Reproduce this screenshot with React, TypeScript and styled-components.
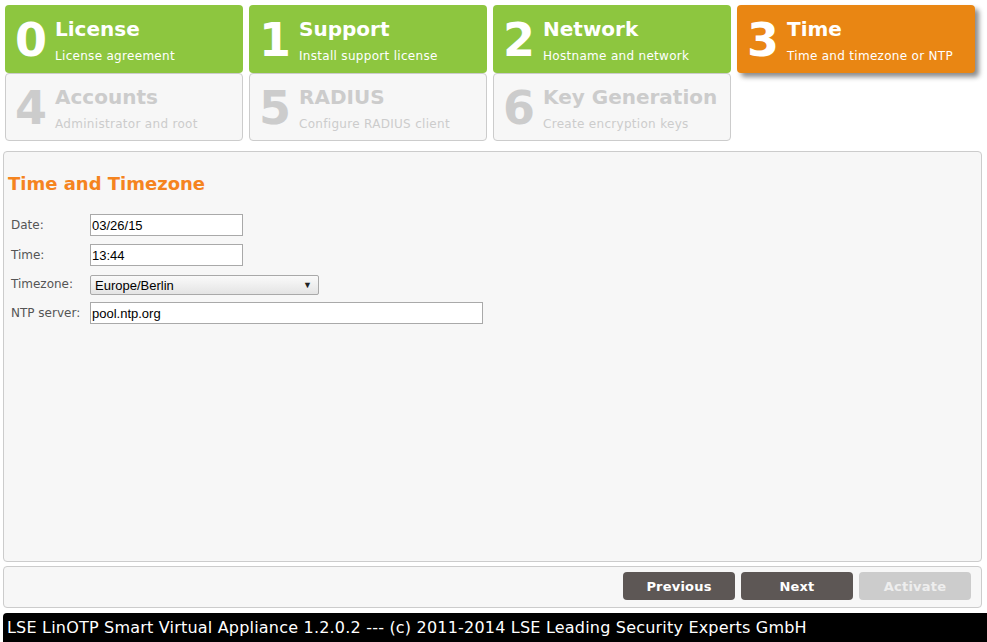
import styled, { createGlobalStyle } from 'styled-components';

const GlobalStyle = createGlobalStyle`
  html, body {
    margin: 0;
    padding: 0;
    background: #ffffff;
    font-family: "DejaVu Sans", Verdana, sans-serif;
  }
`;

const Page = styled.div`
  width: 987px;
  height: 642px;
  display: flex;
  flex-direction: column;
  padding: 5px 0 0 3px;
  box-sizing: border-box;
  overflow: hidden;
`;

const Steps = styled.div`
  display: grid;
  grid-template-columns: repeat(4, 238px);
  column-gap: 6px;
  padding-left: 2px;
`;

type TileKind = 'done' | 'current' | 'todo';

const Tile = styled.div<{ $kind: TileKind }>`
  height: 68px;
  box-sizing: border-box;
  border-radius: 4px;
  display: flex;
  align-items: flex-start;
  padding: 6px 0 0 9px;
  gap: 8px;
  background: ${p => (p.$kind === 'done' ? '#8dc63f' : p.$kind === 'current' ? '#e98613' : '#f7f7f7')};
  border: 1px solid ${p => (p.$kind === 'todo' ? '#cccccc' : 'transparent')};
  color: ${p => (p.$kind === 'todo' ? '#cccccc' : '#ffffff')};
  box-shadow: ${p => (p.$kind === 'current' ? '4px 4px 5px rgba(0,0,0,0.45)' : 'none')};
  position: relative;
  z-index: ${p => (p.$kind === 'current' ? 1 : 0)};
`;

const Num = styled.div`
  font-size: 46px;
  font-weight: bold;
  line-height: 56px;
`;

const TileText = styled.div`
  display: flex;
  flex-direction: column;
  padding-top: 4px;
`;

const TileTitle = styled.div`
  font-size: 20px;
  font-weight: bold;
  line-height: 26px;
`;

const TileSub = styled.div`
  font-size: 12px;
  letter-spacing: 0.3px;
  line-height: 18px;
  margin-top: 5px;
`;

const Panel = styled.div`
  margin-top: 10px;
  width: 979px;
  height: 412px;
  box-sizing: border-box;
  border: 1px solid #cccccc;
  border-radius: 4px;
  background: #f7f7f7;
  padding: 21px 4px 0 4px;
`;

const Heading = styled.h2`
  margin: 0 0 19px 0;
  font-size: 18px;
  font-weight: bold;
  color: #f5841f;
  line-height: 22px;
`;

const Form = styled.div`
  display: grid;
  grid-template-columns: 79px auto;
  row-gap: 8px;
  align-items: center;
  justify-items: start;
  padding-left: 3px;
`;

const Label = styled.label`
  font-size: 12px;
  color: #555555;
`;

const Input = styled.input<{ $w: number }>`
  width: ${p => p.$w}px;
  height: 22px;
  box-sizing: border-box;
  border: 1px solid #a9a9a9;
  background: #ffffff;
  font-family: "Liberation Sans", Arial, sans-serif;
  font-size: 13px;
  padding: 0 1px;
  color: #000000;
`;

const Select = styled.div`
  width: 229px;
  height: 20px;
  margin-top: 1px;
  margin-bottom: -1px;
  box-sizing: border-box;
  border: 1px solid #a9a9a9;
  border-radius: 2px;
  background: linear-gradient(#fafafa, #e4e4e4);
  font-family: "Liberation Sans", Arial, sans-serif;
  font-size: 13px;
  display: flex;
  align-items: center;
  justify-content: space-between;
  padding: 0 6px 0 4px;
  color: #000000;
`;

const Arrow = styled.span`
  font-size: 9px;
  color: #222;
`;

const ButtonBar = styled.div`
  margin-top: 4px;
  width: 979px;
  height: 42px;
  box-sizing: border-box;
  border: 1px solid #cccccc;
  border-radius: 4px;
  background: #f7f7f7;
  display: flex;
  justify-content: flex-end;
  align-items: center;
  gap: 6px;
  padding: 0 10px 2px 0;
`;

const Btn = styled.button<{ $disabled?: boolean }>`
  width: 112px;
  height: 28px;
  border: none;
  border-radius: 4px;
  background: ${p => (p.$disabled ? '#cccccc' : '#5d5755')};
  color: ${p => (p.$disabled ? '#eeeeee' : '#ffffff')};
  font-family: "DejaVu Sans", Verdana, sans-serif;
  font-size: 13px;
  font-weight: bold;
  letter-spacing: 0.2px;
  cursor: pointer;
`;

const Footer = styled.div`
  margin-top: 5px;
  height: 29px;
  background: #000000;
  color: #ffffff;
  border-top-left-radius: 4px;
  font-size: 16px;
  letter-spacing: 0.2px;
  line-height: 29px;
  padding-left: 4px;
  white-space: nowrap;
`;

const steps: { n: number; title: string; sub: string; kind: TileKind }[] = [
  { n: 0, title: 'License', sub: 'License agreement', kind: 'done' },
  { n: 1, title: 'Support', sub: 'Install support license', kind: 'done' },
  { n: 2, title: 'Network', sub: 'Hostname and network', kind: 'done' },
  { n: 3, title: 'Time', sub: 'Time and timezone or NTP', kind: 'current' },
  { n: 4, title: 'Accounts', sub: 'Administrator and root', kind: 'todo' },
  { n: 5, title: 'RADIUS', sub: 'Configure RADIUS client', kind: 'todo' },
  { n: 6, title: 'Key Generation', sub: 'Create encryption keys', kind: 'todo' },
];

export default function App() {
  return (
    <>
      <GlobalStyle />
      <Page>
        <Steps>
          {steps.map(s => (
            <Tile key={s.n} $kind={s.kind}>
              <Num>{s.n}</Num>
              <TileText>
                <TileTitle>{s.title}</TileTitle>
                <TileSub>{s.sub}</TileSub>
              </TileText>
            </Tile>
          ))}
        </Steps>
        <Panel>
          <Heading>Time and Timezone</Heading>
          <Form>
            <Label>Date:</Label>
            <Input $w={153} defaultValue="03/26/15" />
            <Label>Time:</Label>
            <Input $w={153} defaultValue="13:44" />
            <Label>Timezone:</Label>
            <Select>
              <span>Europe/Berlin</span>
              <Arrow>▼</Arrow>
            </Select>
            <Label>NTP server:</Label>
            <Input $w={393} defaultValue="pool.ntp.org" />
          </Form>
        </Panel>
        <ButtonBar>
          <Btn>Previous</Btn>
          <Btn>Next</Btn>
          <Btn $disabled>Activate</Btn>
        </ButtonBar>
        <Footer>LSE LinOTP Smart Virtual Appliance 1.2.0.2 --- (c) 2011-2014 LSE Leading Security Experts GmbH</Footer>
      </Page>
    </>
  );
}
